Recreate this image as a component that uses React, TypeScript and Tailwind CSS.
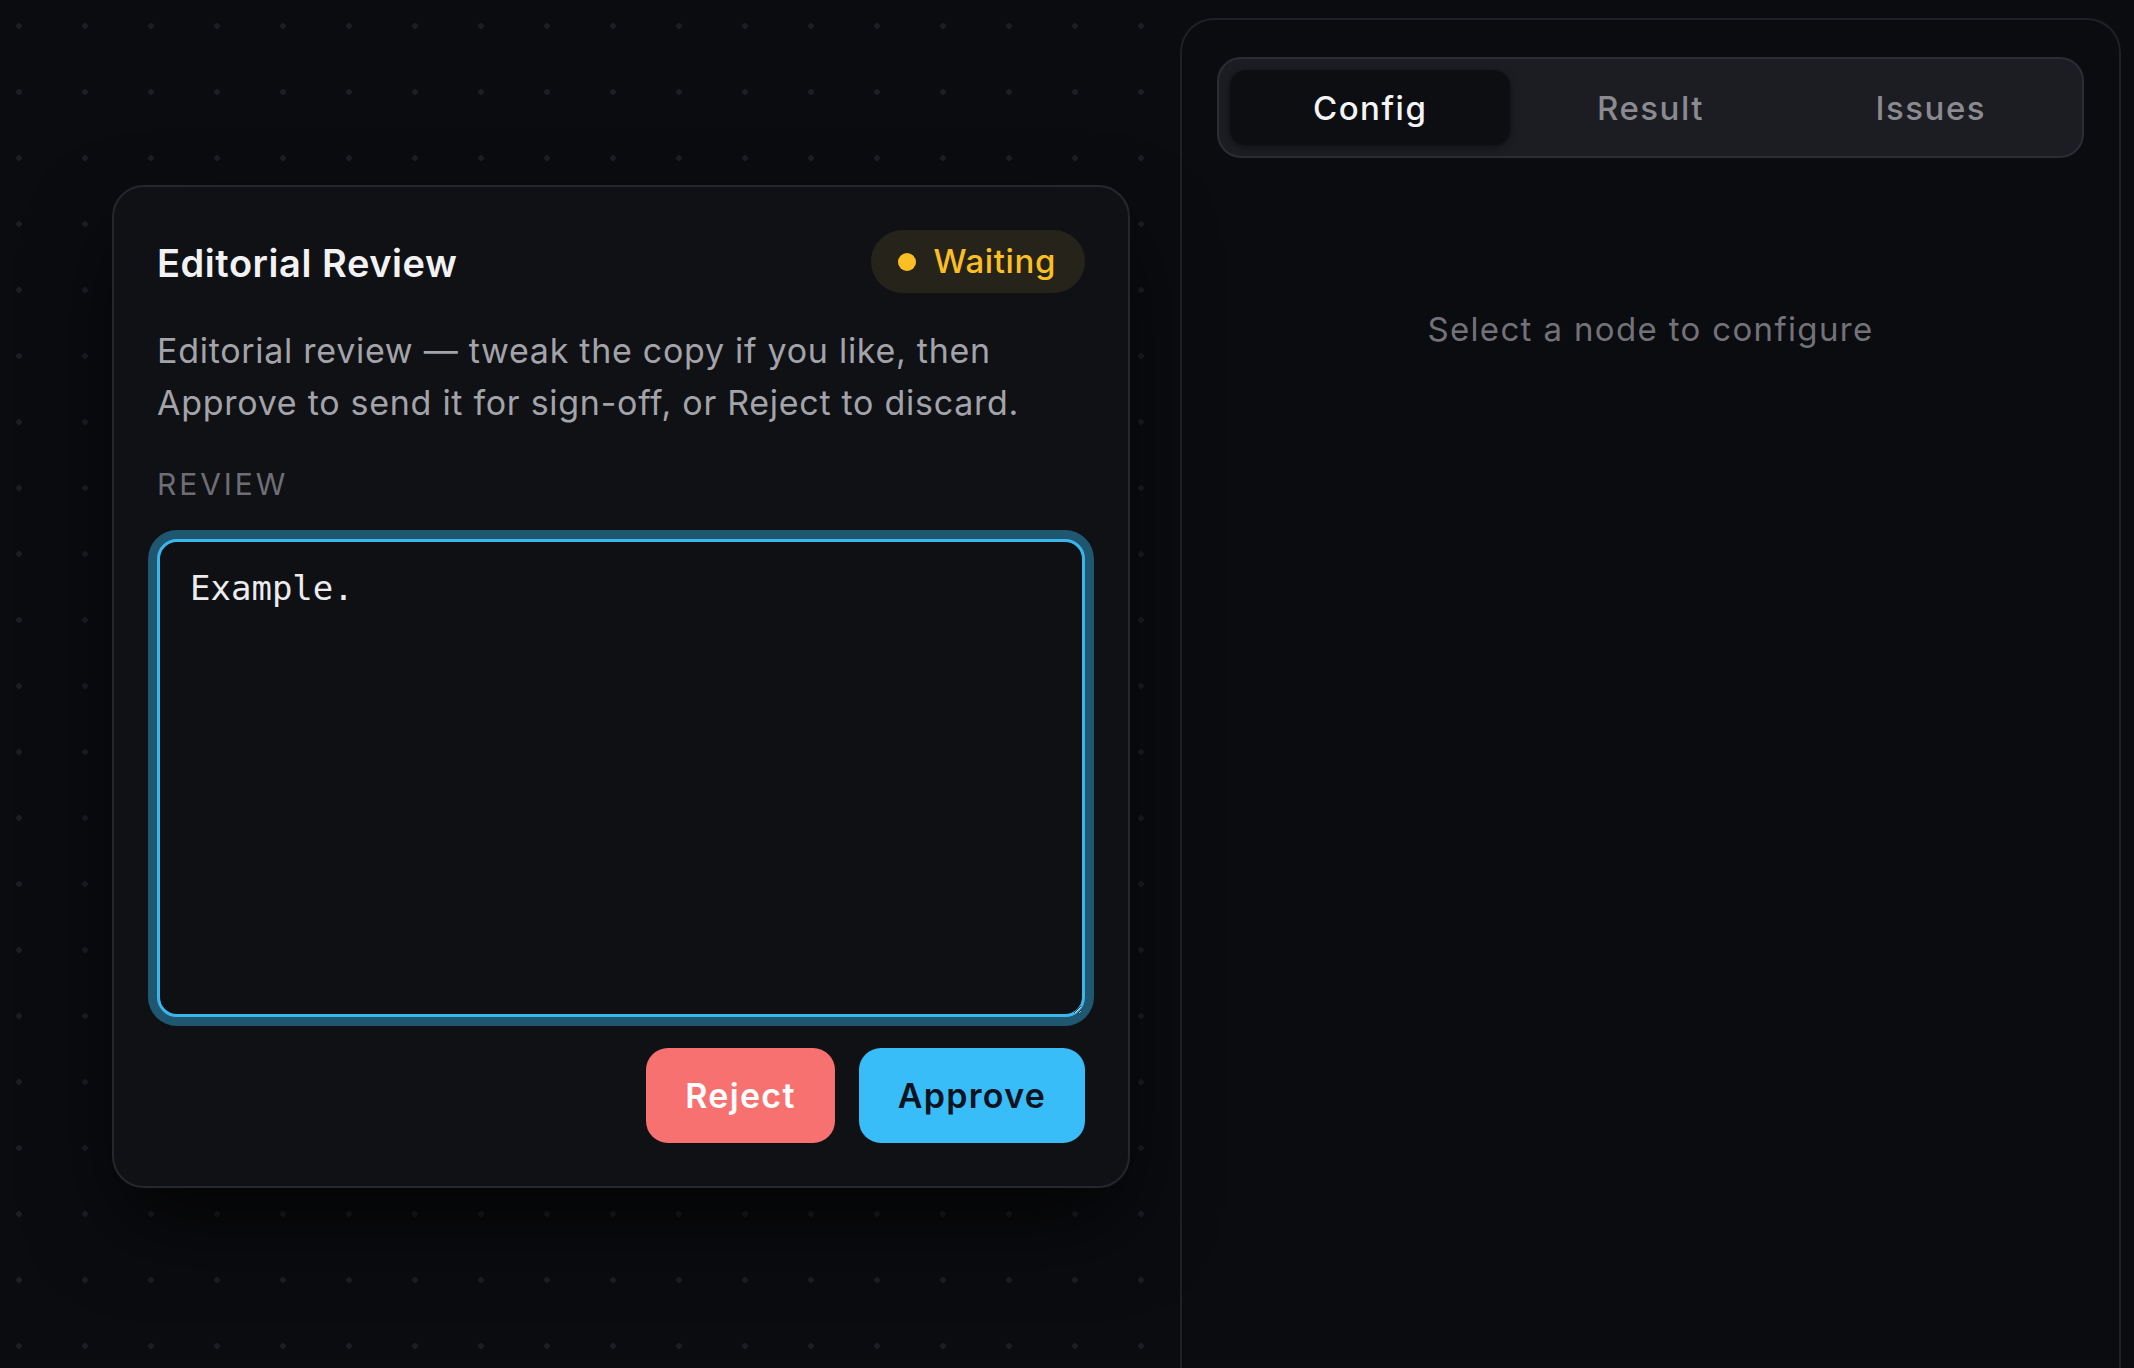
import React from "react";

export default function App() {
  return (
    <div
      className="flex h-[1368px] w-full overflow-hidden bg-[#0b0c10] text-[#e8e8ea]"
      style={{ fontFamily: "Inter, 'Noto Sans', sans-serif" }}
    >
      {/* Canvas */}
      <div className="relative flex-1 bg-[radial-gradient(circle,#1c1e24_2.6px,transparent_3px)] bg-[length:66px_66px] bg-[position:-14px_-7px]">
        {/* Node card */}
        <div className="absolute left-[112px] top-[185px] flex w-[1018px] flex-col rounded-[32px] border-2 border-[#25272c] bg-[#101115] p-[43px] shadow-[0_40px_90px_-10px_rgba(0,0,0,0.75)]">
          <div className="flex h-[63px] items-center justify-between">
            <div className="mt-[3px] text-[38px] font-semibold tracking-[0.55px] text-[#f2f2f4]">
              Editorial Review
            </div>
            <div className="flex h-[63px] items-center gap-[18px] rounded-full bg-[#26241a] pl-[27px] pr-[29px]">
              <span className="h-[18px] w-[18px] rounded-full bg-[#fbbf24]" />
              <span className="text-[33px] font-medium tracking-[0.6px] text-[#fbbf24]">Waiting</span>
            </div>
          </div>
          <p className="mt-[32px] text-[34px] leading-[52px] tracking-[0.72px] text-[#a3a3aa]">
            Editorial review — tweak the copy if you like, then Approve to send it for sign-off, or Reject to discard.
          </p>
          <div className="mt-[35px] text-[30px] uppercase leading-[40px] tracking-[2.9px] text-[#6e6e75]">
            Review
          </div>
          <textarea
            defaultValue="Example."
            autoFocus
            className="mt-[35px] h-[478px] w-full resize rounded-[20px] border-[3px] border-[#3cb6ea] bg-[#0e1014] px-[30px] py-[26px] text-[34px] leading-[40px] text-[#ececee] caret-[#ececee] outline-none ring-[9px] ring-[#1f5670]"
            style={{ fontFamily: "'DejaVu Sans Mono', monospace" }}
          />
          <div className="mt-[31px] flex justify-end gap-[24px]">
            <button className="h-[95px] w-[189px] rounded-[22px] bg-[#f87171] text-[34px] font-semibold tracking-[1.3px] text-white">
              Reject
            </button>
            <button className="h-[95px] w-[226px] rounded-[22px] bg-[#38bdf8] text-[34px] font-semibold tracking-[1.3px] text-[#0b1220]">
              Approve
            </button>
          </div>
        </div>
      </div>

      {/* Right panel */}
      <div className="mr-[13px] mt-[18px] flex h-[1400px] w-[941px] shrink-0 flex-col rounded-t-[34px] border-2 border-b-0 border-[#1f2126] bg-[#0b0c10] px-[35px] pt-[37px]">
        <div className="grid h-[101px] grid-cols-3 rounded-[24px] border-2 border-[#2a2d33] bg-[#1b1d22] p-[11px]">
          <div className="flex items-center justify-center rounded-[16px] bg-[#0d0e12] pt-[2px] text-[33px] font-medium tracking-[1.5px] text-[#f5f5f7] shadow-[0_2px_6px_rgba(0,0,0,0.5)]">
            Config
          </div>
          <div className="flex items-center justify-center pt-[2px] text-[33px] font-medium tracking-[1.5px] text-[#8a8a90]">
            Result
          </div>
          <div className="flex items-center justify-center pt-[2px] text-[33px] font-medium tracking-[1.5px] text-[#8a8a90]">
            Issues
          </div>
        </div>
        <div className="mt-[151px] text-center text-[33px] leading-[40px] tracking-[1.35px] text-[#727278]">
          Select a node to configure
        </div>
      </div>
    </div>
  );
}
